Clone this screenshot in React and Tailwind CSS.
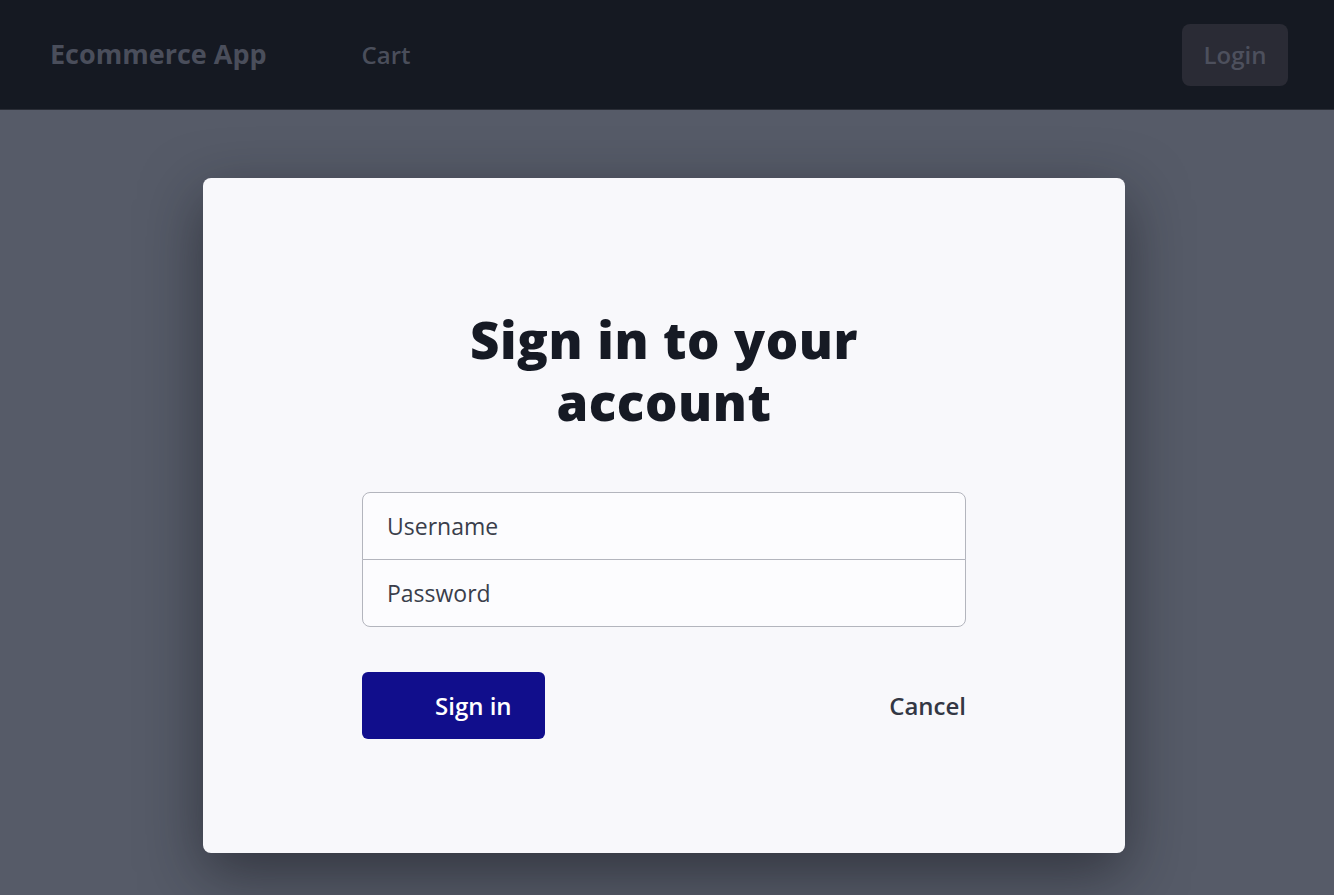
export default function App() {
  return (
    <div className="flex min-h-screen flex-col bg-[#565b68] font-['Open_Sans',sans-serif]">
      <nav className="flex h-[110px] items-center border-b border-[#2a2d36] bg-[#151922] pl-[50px] pr-[46px]">
        <div className="text-[27px] font-bold text-[#4a4e5b]">Ecommerce App</div>
        <a className="ml-[95px] text-[24px] font-semibold text-[#4a4e5b]">Cart</a>
        <button className="ml-auto h-[62px] w-[106px] rounded-lg bg-[#2a2b35] text-[24px] font-semibold text-[#4d505d]">
          Login
        </button>
      </nav>

      <div className="flex flex-1 pl-[203px] pt-[68px]">
        <div className="h-[675px] w-[922px] rounded-lg bg-[#f8f8fb] shadow-[0_20px_60px_rgba(20,22,30,0.55)]">
          <div className="mx-auto flex w-[604px] flex-col pt-[130px]">
            <h1 className="text-center text-[51px] font-extrabold leading-[62px] tracking-[0.6px] text-[#161a24]">
              Sign in to your
              <br />
              account
            </h1>

            <div className="mt-[60px] flex flex-col">
              <input
                placeholder="Username"
                className="h-[68px] rounded-t-lg border border-[#b3b5bd] bg-[#fcfcfe] px-6 text-[23px] text-[#2d3140] placeholder:text-[#3a3e4b] outline-none"
              />
              <input
                type="password"
                placeholder="Password"
                className="-mt-px h-[68px] rounded-b-lg border border-[#b3b5bd] bg-[#fcfcfe] px-6 text-[23px] text-[#2d3140] placeholder:text-[#3a3e4b] outline-none"
              />
            </div>

            <div className="mt-[45px] flex items-center justify-between">
              <button className="h-[67px] w-[183px] rounded-md bg-[#110e8c] pl-[73px] text-left text-[24px] font-semibold text-white">
                Sign in
              </button>
              <button className="text-[24px] font-semibold text-[#333744]">Cancel</button>
            </div>
          </div>
        </div>
      </div>
    </div>
  );
}
